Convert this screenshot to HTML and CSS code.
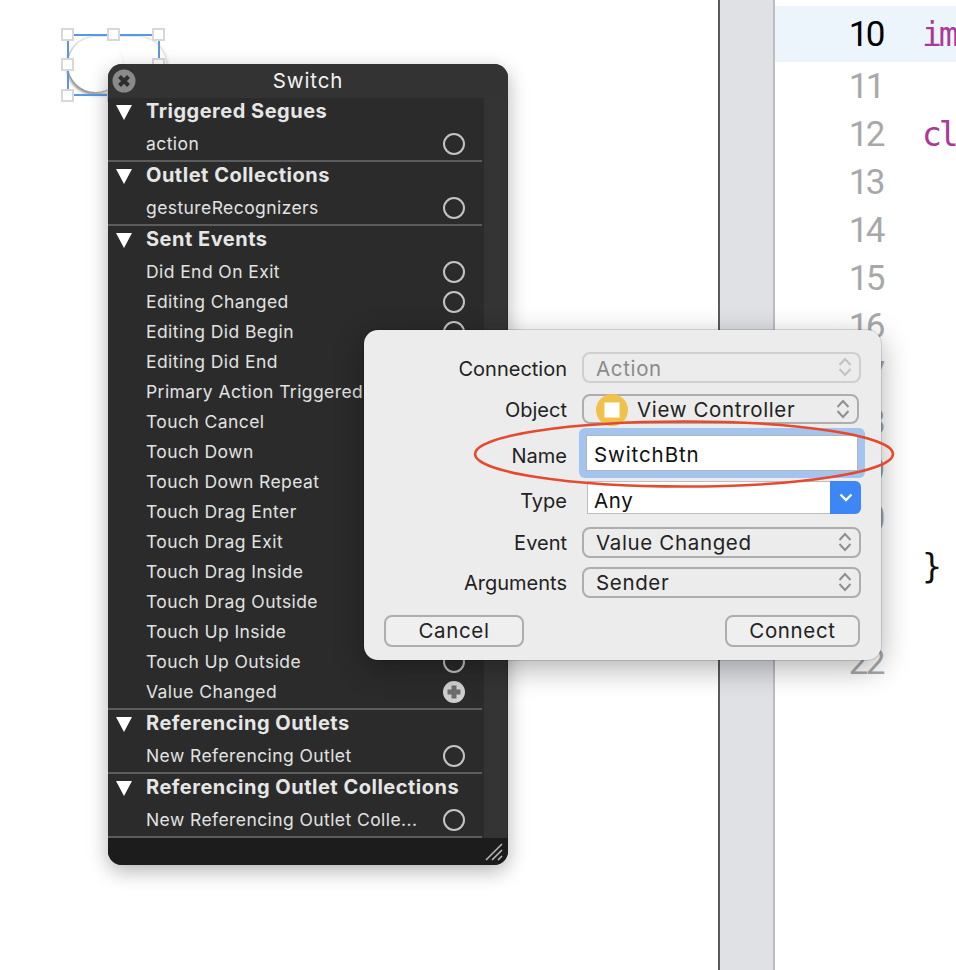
FILE: index.html
```html
<!DOCTYPE html>
<html lang="en">
<head>
<meta charset="utf-8">
<title>Switch connection</title>
<link rel="stylesheet" href="styles.css">
</head>
<body>
<main class="canvas">
  <section class="editor">
    <div class="gutter-edge"></div>
    <div class="gutter"></div>
    <div class="code">
      <div class="line current"><span class="num">10</span><span class="src kw">im</span></div>
      <div class="line"><span class="num">11</span></div>
      <div class="line"><span class="num">12</span><span class="src kw">cl</span></div>
      <div class="line"><span class="num">13</span></div>
      <div class="line"><span class="num">14</span></div>
      <div class="line"><span class="num">15</span></div>
      <div class="line"><span class="num">16</span></div>
      <div class="line"><span class="num">17</span></div>
      <div class="line"><span class="num">18</span></div>
      <div class="line"><span class="num">19</span></div>
      <div class="line"><span class="num">20</span></div>
      <div class="line"><span class="num">21</span><span class="src">}</span></div>
      <div class="line"><span class="num"></span></div>
      <div class="line"><span class="num">22</span></div>
    </div>
  </section>

  <div class="switch-widget">
    <div class="track"></div>
    <div class="knob"></div>
    <div class="sel-box"></div>
    <i class="handle h-tl"></i><i class="handle h-tm"></i><i class="handle h-tr"></i>
    <i class="handle h-ml"></i><i class="handle h-mr"></i>
    <i class="handle h-bl"></i><i class="handle h-bm"></i>
  </div>

  <section class="panel">
    <header class="panel-title">
      <svg class="close" viewBox="0 0 24 24" width="24" height="24"><circle cx="12" cy="12" r="11.500" fill="#8a8a8a"/><path d="M7.500 7.500l9 9M16.500 7.500l-9 9" stroke="#2e2e2e" stroke-width="4"/></svg>
      <span>Switch</span>
    </header>
    <div class="panel-main">
      <div class="list">
        <div class="group">
          <h3 class="group-head"><svg class="tri" viewBox="0 0 16 15" width="16" height="15"><path d="M0 0h16L8 15z"/></svg>Triggered Segues</h3>
          <div class="row">action<svg class="dot" viewBox="0 0 24 24" width="24" height="24"><circle cx="12" cy="12" r="10" /></svg></div>
        </div>
        <div class="group">
          <h3 class="group-head"><svg class="tri" viewBox="0 0 16 15" width="16" height="15"><path d="M0 0h16L8 15z"/></svg>Outlet Collections</h3>
          <div class="row">gestureRecognizers<svg class="dot" viewBox="0 0 24 24" width="24" height="24"><circle cx="12" cy="12" r="10" /></svg></div>
        </div>
        <div class="group">
          <h3 class="group-head"><svg class="tri" viewBox="0 0 16 15" width="16" height="15"><path d="M0 0h16L8 15z"/></svg>Sent Events</h3>
          <div class="row">Did End On Exit<svg class="dot" viewBox="0 0 24 24" width="24" height="24"><circle cx="12" cy="12" r="10" /></svg></div>
          <div class="row">Editing Changed<svg class="dot" viewBox="0 0 24 24" width="24" height="24"><circle cx="12" cy="12" r="10" /></svg></div>
          <div class="row">Editing Did Begin<svg class="dot" viewBox="0 0 24 24" width="24" height="24"><circle cx="12" cy="12" r="10" /></svg></div>
          <div class="row">Editing Did End</div>
          <div class="row">Primary Action Triggered</div>
          <div class="row">Touch Cancel</div>
          <div class="row">Touch Down</div>
          <div class="row">Touch Down Repeat</div>
          <div class="row">Touch Drag Enter</div>
          <div class="row">Touch Drag Exit</div>
          <div class="row">Touch Drag Inside</div>
          <div class="row">Touch Drag Outside</div>
          <div class="row">Touch Up Inside</div>
          <div class="row">Touch Up Outside<svg class="dot" viewBox="0 0 24 24" width="24" height="24"><circle cx="12" cy="12" r="10" /></svg></div>
          <div class="row">Value Changed<svg class="dot" viewBox="0 0 24 24" width="24" height="24"><circle class="plus-bg" cx="12" cy="12" r="11"/><path class="plus" d="M9.500 5.500h5v4h4v5h-4v4h-5v-4h-4v-5h4z"/></svg></div>
        </div>
        <div class="group">
          <h3 class="group-head"><svg class="tri" viewBox="0 0 16 15" width="16" height="15"><path d="M0 0h16L8 15z"/></svg>Referencing Outlets</h3>
          <div class="row">New Referencing Outlet<svg class="dot" viewBox="0 0 24 24" width="24" height="24"><circle cx="12" cy="12" r="10" /></svg></div>
        </div>
        <div class="group">
          <h3 class="group-head"><svg class="tri" viewBox="0 0 16 15" width="16" height="15"><path d="M0 0h16L8 15z"/></svg>Referencing Outlet Collections</h3>
          <div class="row">New Referencing Outlet Colle...<svg class="dot" viewBox="0 0 24 24" width="24" height="24"><circle cx="12" cy="12" r="10" /></svg></div>
        </div>
      </div>
      <div class="strip"></div>
    </div>
    <footer class="panel-foot">
      <svg viewBox="0 0 18 18" width="18" height="18"><path d="M1 17L17 1M7 17L17 7M13 17l4-4" stroke="#b5b5b5" stroke-width="1.600" fill="none"/></svg>
    </footer>
  </section>

  <section class="dialog">
    <div class="form">
      <label class="lab r-conn">Connection</label>
      <div class="select disabled r-conn">Action<svg class="updown" viewBox="0 0 14 20" width="14" height="20"><path d="M1.500 8L7 2l5.500 6M1.500 12L7 18l5.500-6"/></svg></div>

      <label class="lab r-obj">Object</label>
      <div class="select object r-obj"><svg class="vc" viewBox="0 0 32 32" width="32" height="32"><circle cx="16" cy="16" r="16" fill="#f0c24c"/><rect x="8.500" y="8.500" width="15" height="15" fill="#fff" stroke="#f7e3ae" stroke-dasharray="1 1"/></svg>View Controller<svg class="updown" viewBox="0 0 14 20" width="14" height="20"><path d="M1.500 8L7 2l5.500 6M1.500 12L7 18l5.500-6"/></svg></div>

      <label class="lab r-name">Name</label>
      <div class="ring r-name"><div class="input">SwitchBtn</div></div>

      <label class="lab r-type">Type</label>
      <div class="combo r-type"><span class="combo-text">Any</span><span class="combo-btn"><svg viewBox="0 0 14 9" width="14" height="9"><path d="M1.500 1.500L7 7l5.500-5.500"/></svg></span></div>

      <label class="lab r-event">Event</label>
      <div class="select r-event">Value Changed<svg class="updown" viewBox="0 0 14 20" width="14" height="20"><path d="M1.500 8L7 2l5.500 6M1.500 12L7 18l5.500-6"/></svg></div>

      <label class="lab r-args">Arguments</label>
      <div class="select r-args">Sender<svg class="updown" viewBox="0 0 14 20" width="14" height="20"><path d="M1.500 8L7 2l5.500 6M1.500 12L7 18l5.500-6"/></svg></div>
    </div>
    <div class="actions">
      <button class="btn cancel">Cancel</button>
      <button class="btn connect">Connect</button>
    </div>
  </section>

  <svg class="annotation" viewBox="0 0 426 72" width="426" height="72"><ellipse cx="213" cy="36" rx="209" ry="32.500"/></svg>
</main>
</body>
</html>
```
FILE: styles.css
```css
* { box-sizing: border-box; }
html, body { margin: 0; padding: 0; background: #fff; }
.canvas {
  position: relative;
  width: 956px;
  height: 970px;
  overflow: hidden;
  font-family: Inter, "Liberation Sans", sans-serif;
  color: #111;
}

/* editor behind the windows */
.editor { position: absolute; left: 718px; top: 0; width: 238px; height: 970px; display: flex; }
.gutter-edge { width: 2px; background: #5a5a5a; }
.gutter { width: 55px; background: #e0e1e5; border-right: 2px solid #bcbdc0; }
.code { flex: 1; padding-top: 6px; }
.line { height: 48px; display: flex; align-items: center; position: relative; }
.line.current { height: 56px; background: #edf5fc; }
.num {
  width: 108px;
  text-align: right;
  font: 400 35px/1 Roboto, sans-serif;
  letter-spacing: -2.500px;
  color: #a8a8a8;
}
.current .num { color: #000; }
.src { margin-left: 39px; font: 400 33px/1 "DejaVu Sans Mono", monospace; letter-spacing: -3px; color: #111; }
.src.kw { color: #a93a97; }

/* switch on the storyboard */
.switch-widget { position: absolute; left: 61px; top: 28px; width: 106px; height: 74px; }
.track { position: absolute; left: 7px; top: 9px; width: 98px; height: 56px; border-radius: 28px; background: #fff; box-shadow: 0 0 0 1px #e4e4e4, 0 1px 4px rgba(0,0,0,.35); }
.knob { position: absolute; left: 7px; top: 9px; width: 55px; height: 55px; border-radius: 50%; background: #fff; box-shadow: -1px 2px 3px rgba(0,0,0,.4); }
.sel-box { position: absolute; left: 6px; top: 6px; width: 93px; height: 62px; border: 2px solid #5a96e6; }
.handle { position: absolute; width: 13px; height: 13px; background: #fff; border: 2px solid #d8d8d8; }
.h-tl { left: 0; top: 0; }
.h-tm { left: 46px; top: 0; }
.h-tr { left: 91px; top: 0; }
.h-ml { left: 0; top: 30px; }
.h-mr { left: 91px; top: 30px; }
.h-bl { left: 0; top: 61px; }
.h-bm { left: 46px; top: 61px; }

/* connections panel */
.panel {
  position: absolute;
  left: 108px; top: 64px;
  width: 400px; height: 801px;
  border-radius: 14px;
  background: #2b2b2b;
  overflow: hidden;
  display: flex;
  flex-direction: column;
  box-shadow: 0 6px 20px rgba(0,0,0,.3);
}
.panel-title {
  height: 34px;
  flex: none;
  background: #333;
  display: flex;
  align-items: center;
  justify-content: center;
  position: relative;
  color: #f2f2f2;
  font-size: 20.500px;
  letter-spacing: .9px;
  padding-bottom: 1px;
}
.close { position: absolute; left: 4px; top: 5px; }
.panel-main { flex: 1; display: flex; min-height: 0; }
.list { width: 374px; flex: none; }
.strip { margin-left: 2px; width: 23px; background: #343434; }
.group { border-bottom: 2px solid #5c5c5c; padding-bottom: 1px; }
.group-head {
  margin: 0;
  height: 31px;
  padding: 0 0 5px 38px;
  display: flex;
  align-items: center;
  position: relative;
  font-size: 20px;
  letter-spacing: .5px;
  font-weight: 700;
  color: #e6e6e6;
}
.tri { position: absolute; left: 8px; top: 7px; fill: #fff; }
.row {
  height: 30px;
  padding: 0 0 2px 38px;
  display: flex;
  align-items: center;
  position: relative;
  font-size: 17.500px;
  letter-spacing: .42px;
  color: #e2e2e2;
  white-space: nowrap;
}
.dot { position: absolute; left: 334px; top: 3px; fill: none; stroke: #c4c4c4; stroke-width: 2; }
.plus-bg { fill: #d0d0d0; stroke: none; }
.plus { fill: #6d6d6d; stroke: none; }
.panel-foot {
  height: 27px;
  flex: none;
  background: #1c1c1c;
  display: flex;
  justify-content: flex-end;
  align-items: flex-end;
  padding: 0 5px 4px 0;
}

/* action sheet */
.dialog {
  position: absolute;
  left: 364px; top: 330px;
  width: 517px; height: 330px;
  border-radius: 14px;
  background: #ececec;
  box-shadow: 0 8px 30px rgba(0,0,0,.32), 0 0 0 1px rgba(0,0,0,.12);
  padding: 22px 20px 0;
  font-size: 20.500px;
  letter-spacing: .65px;
}
.form {
  display: grid;
  grid-template-columns: 183px 279px;
  grid-template-rows: 31px 41px 54px 36px 44px 40px;
  column-gap: 15px;
}
.lab { display: flex; align-items: center; justify-content: flex-end; color: #222; font-size: 20px; letter-spacing: 0; padding-top: 2px; }
.select {
  border: 2px solid #adadad;
  border-radius: 8px;
  display: flex;
  align-items: center;
  padding: 0 0 0 12px;
  position: relative;
  color: #222;
}
.select.disabled { color: #8a8a8a; border-color: #cfcfcf; padding-top: 1px; }
.select.object { width: 277px; padding: 1px 0 0 12px; }
.r-conn { grid-row: 1; }
.r-obj { grid-row: 2; margin-top: 11px; height: 30px; }
.r-name { grid-row: 3; margin-top: 4px; }
.r-type { grid-row: 4; }
.r-event { grid-row: 5; margin-top: 13px; }
.r-args { grid-row: 6; margin-top: 9px; }
.lab.r-event, .lab.r-args { padding-top: 0; }
.lab.r-type { padding-top: 9px; }
.lab.r-name { padding-top: 6px; }
.updown { position: absolute; right: 7px; top: 3px; fill: none; stroke: #8f8f8f; stroke-width: 2; }
.disabled .updown { stroke: #c2c2c2; }
.vc { margin-right: 9px; flex: none; }
.ring {
  margin-left: -3px;
  width: 286px;
  height: 50px;
  background: #a3c4ef;
  border-radius: 6px;
  padding: 7px;
}
.input {
  height: 36px;
  background: #fff;
  border: 1px solid #b4b4b4;
  display: flex;
  align-items: center;
  padding: 2px 0 0 7px;
  color: #111;
  letter-spacing: .9px;
}
.combo {
  margin: 3px 0 0 5px;
  height: 33px;
  width: 274px;
  background: #fff;
  border: 1px solid #bdbdbd;
  border-right: 0;
  border-radius: 0 6px 6px 0;
  display: flex;
  align-items: center;
  justify-content: space-between;
  padding-left: 6px;
  color: #111;
}
.combo-text { padding-top: 5px; }
.combo-btn {
  width: 31px;
  height: 33px;
  margin-top: -1px;
  background: #3c87f5;
  border-radius: 0 6px 6px 0;
  display: flex;
  align-items: center;
  justify-content: center;
}
.combo-btn svg { fill: none; stroke: #fff; stroke-width: 2.400; }
.actions { display: flex; justify-content: space-between; padding-right: 1px; margin-top: 17px; }
.btn {
  height: 32px;
  border: 2px solid #adadad;
  border-radius: 8px;
  background: #efefef;
  font: inherit;
  letter-spacing: inherit;
  color: #222;
  padding: 0 0 2px;
}
.cancel { width: 140px; }
.connect { width: 135px; }

/* hand-drawn highlight */
.annotation { position: absolute; left: 471px; top: 418px; fill: none; stroke: #e64a2e; stroke-width: 2.500; }
```
